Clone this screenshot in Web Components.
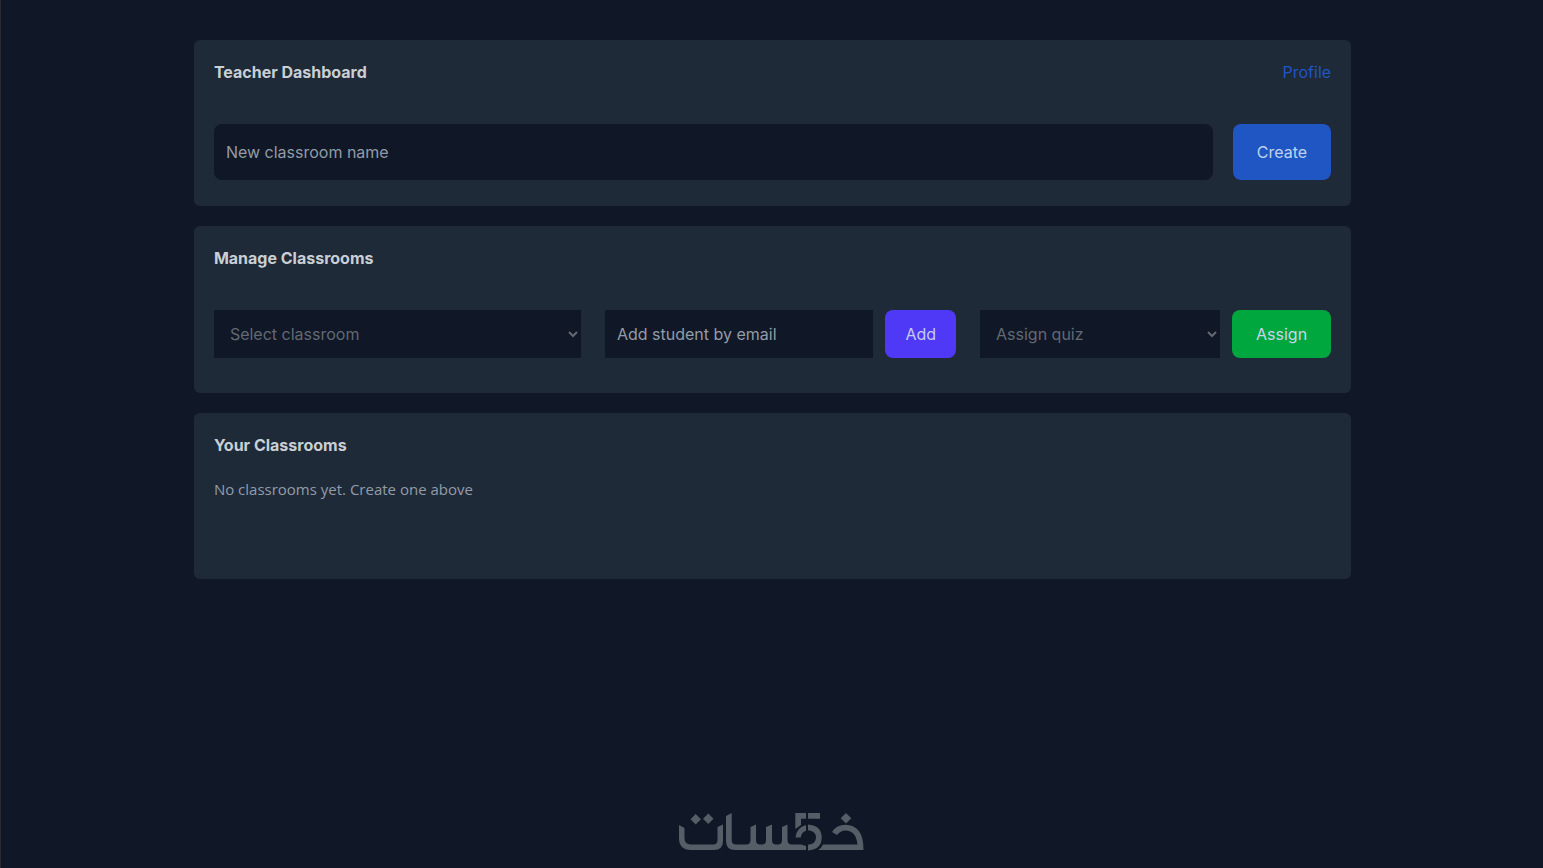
<!DOCTYPE html>
<html lang="en">
<head>
<meta charset="utf-8">
<meta name="viewport" content="width=device-width, initial-scale=1">
<title>Teacher Dashboard</title>
<style>
  html { background: #101726; }
  body {
    margin: 0;
    font: 16px/24px Inter, "Liberation Sans", sans-serif;
    color: #c9cfd4;
    --page: #101726;
    --card: #1f2a38;
    --muted: #929ca7;
    --dim: #626972;
    --blue: #2055c4;
    --indigo: #4f39f6;
    --green: #00a63e;
  }
</style>
</head>
<body>
<teacher-page></teacher-page>
<script>
class ShadowElement extends HTMLElement {
  constructor() {
    super();
    this.attachShadow({ mode: "open" }).innerHTML =
      `<style>*{box-sizing:border-box}</style>${this.constructor.markup}`;
  }
}

class PanelCard extends ShadowElement {
  static markup = `
    <style>
      :host { display: block; }
      section { background: var(--card); border-radius: 6px; padding: 20px; min-height: 166px; }
      header { display: flex; justify-content: space-between; }
      ::slotted(h1), ::slotted(h2) { margin: 0; font-size: 16px; line-height: 24px; font-weight: 700; }
    </style>
    <section>
      <header><slot name="title"></slot><slot name="action"></slot></header>
      <slot></slot>
    </section>`;
}

class ActionButton extends ShadowElement {
  static markup = `
    <style>
      :host { display: flex; }
      button { border: 0; border-radius: 8px; padding: 0 var(--pad, 24px); background: var(--fill);
        color: var(--ink, #bfd3ec); font: inherit; cursor: pointer; }
    </style>
    <button type="button"><slot></slot></button>`;
}

class TextField extends ShadowElement {
  static markup = `
    <style>
      :host { display: flex; flex: 1; min-width: 0; }
      input { width: 100%; min-width: 0; border: 0; border-radius: var(--radius, 0); padding: 0 12px;
        background: var(--page); color: inherit; font: inherit; }
      input::placeholder { color: var(--muted); opacity: 1; }
    </style>
    <input>`;
  connectedCallback() {
    const input = this.shadowRoot.querySelector("input");
    input.type = this.getAttribute("type") || "text";
    input.placeholder = this.getAttribute("placeholder");
    input.setAttribute("aria-label", input.placeholder);
  }
}

class SelectField extends ShadowElement {
  static markup = `
    <style>
      :host { display: flex; flex: 1; min-width: 0; }
      select { width: 100%; border: 0; border-radius: 0; padding: 0 0 0 12px;
        background-color: var(--page); color: var(--dim); font: inherit; }
    </style>
    <select><option></option></select>`;
  connectedCallback() {
    const label = this.getAttribute("placeholder");
    this.shadowRoot.querySelector("select").setAttribute("aria-label", label);
    this.shadowRoot.querySelector("option").textContent = label;
  }
}

class KhamsatLogo extends ShadowElement {
  static markup = `
    <style>
      :host { display: block; width: 185px; height: 38px; }
      svg { display: block; width: 100%; height: 100%; fill: #555d66; }
    </style>
    <svg viewBox="9 8 185 38" role="img" aria-label="Khamsat">
      <path d="M9 20 L14.5 23 V33 Q14.5 39.5 21 39.5 H43 Q47.5 39.5 47.5 35 V22 L53 19.5 V36 Q53 45 44 45 H21 Q9 45 9 33Z"/>
      <path d="M25.7 9 L31 14.3 L25.7 19.5 L20.5 14.3Z M38.3 8.5 L43.5 13.7 L38.3 19 L33 13.7Z"/>
      <path d="M56 11 L61.7 8 V35 Q61.7 39.5 66 39.5 H76 Q80.5 39.5 80.5 35 V22 L86 19.5 V35 Q86 39.5 90 39.5 H92 Q96 39.5 96 35 V22 L102 19.5 V35 Q102 39.5 106 39.5 H108 Q112 39.5 112 35 V22 L117.5 19.5 V35 Q117.5 39.5 122 39.5 H131 L136 41 V45 H65 Q56 45 56 36Z"/>
      <path d="M125.3 8 H136 V13.7 H131 V20 L125.3 24Z M138 8 H150 V13.7 H138Z"/>
      <path d="M136 20 V25.7 Q131.5 27 130.8 32.5 H125.5 Q126.5 22.5 136 20Z"/>
      <path d="M138 19.5 Q151.7 20.5 151.7 32.5 Q151.7 44.5 138 45.5 V39.8 Q146 39 146 32.5 Q146 26 138 25.2Z"/>
      <path d="M153 39.5 H187.5 Q186 25.5 175.5 25.5 Q170.5 25.5 167 30 L162 27 Q166.5 19.8 175.5 19.8 Q193.5 20 193.5 45 H148 Q151.5 43 153 39.5Z"/>
      <path d="M176 8 L181.3 13.3 L176 18.6 L170.7 13.3Z"/>
    </svg>`;
}

class TeacherPage extends ShadowElement {
  static markup = `
    <style>
      :host { display: flex; flex-direction: column; min-height: 100vh; box-sizing: border-box;
        border-left: 1px solid #2b2a33; padding-left: 1px; }
      main { width: 75vw; margin: 0 auto; padding: 40px 0; display: grid; gap: 20px; }
      a { color: var(--blue); text-decoration: none; }
      .create { display: flex; gap: 20px; height: 56px; margin-top: 40px; --radius: 8px; }
      .manage { display: grid; grid-template-columns: 367fr 351fr 351fr; gap: 24px;
        height: 48px; margin: 40px 0 15px; }
      .pair { display: flex; gap: 12px; min-width: 0; }
      p { margin: 20px 0 0; color: var(--muted); font-family: "Open Sans", "Noto Sans", sans-serif; font-size: 15px; }
      footer { margin-top: auto; padding: 0 2px 17px 0; display: flex; justify-content: center; }
      .blue { --fill: var(--blue); }
      .indigo { --fill: var(--indigo); --pad: 20px; --ink: #c2cdf0; }
      .green { --fill: var(--green); --ink: #c8d4ea; }
    </style>
    <main>
      <panel-card>
        <h1 slot="title">Teacher Dashboard</h1>
        <a slot="action" href="#profile">Profile</a>
        <div class="create">
          <text-field placeholder="New classroom name"></text-field>
          <action-button class="blue">Create</action-button>
        </div>
      </panel-card>
      <panel-card>
        <h2 slot="title">Manage Classrooms</h2>
        <div class="manage">
          <select-field placeholder="Select classroom"></select-field>
          <div class="pair">
            <text-field type="email" placeholder="Add student by email"></text-field>
            <action-button class="indigo">Add</action-button>
          </div>
          <div class="pair">
            <select-field placeholder="Assign quiz"></select-field>
            <action-button class="green">Assign</action-button>
          </div>
        </div>
      </panel-card>
      <panel-card>
        <h2 slot="title">Your Classrooms</h2>
        <p>No classrooms yet. Create one above</p>
      </panel-card>
    </main>
    <footer><khamsat-logo></khamsat-logo></footer>`;
}

customElements.define("panel-card", PanelCard);
customElements.define("action-button", ActionButton);
customElements.define("text-field", TextField);
customElements.define("select-field", SelectField);
customElements.define("khamsat-logo", KhamsatLogo);
customElements.define("teacher-page", TeacherPage);
</script>
</body>
</html>
